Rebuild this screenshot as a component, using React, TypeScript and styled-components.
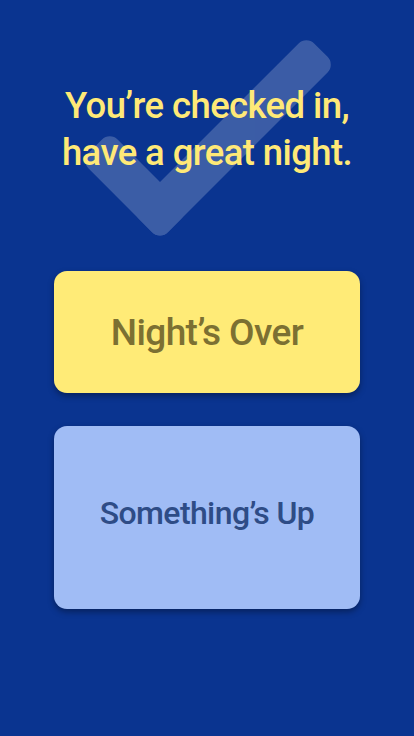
import React from "react";
import styled, { createGlobalStyle } from "styled-components";

const GlobalStyle = createGlobalStyle`
  html, body {
    margin: 0;
    padding: 0;
    background: #0a3490;
  }
  * {
    box-sizing: border-box;
  }
`;

const Screen = styled.div`
  width: 414px;
  height: 736px;
  background: #0a3490;
  display: flex;
  flex-direction: column;
  align-items: center;
  padding: 82px 54px 0;
  font-family: Roboto, "Liberation Sans", sans-serif;
  overflow: hidden;
`;

const Header = styled.div`
  position: relative;
  width: 100%;
  height: 189px;
  display: flex;
  justify-content: center;
`;

const CheckMark = styled.svg`
  position: absolute;
  left: -54px;
  top: -82px;
  width: 414px;
  height: 271px;
`;

const Title = styled.h1`
  position: relative;
  margin: 0;
  color: #ffe977;
  font-size: 36.5px;
  font-weight: 500;
  line-height: 47px;
  text-align: center;
  letter-spacing: -0.6px;
  white-space: nowrap;
`;

const Buttons = styled.div`
  width: 100%;
  display: flex;
  flex-direction: column;
  gap: 33px;
`;

interface ActionProps {
  tall?: boolean;
  tone: "yellow" | "blue";
}

const Action = styled.button<ActionProps>`
  width: 306px;
  height: ${p => (p.tall ? "183px" : "122px")};
  padding: 0 0 ${p => (p.tall ? "10px" : "0")};
  border: none;
  border-radius: 13px;
  background: ${p => (p.tone === "yellow" ? "#ffeb77" : "#a0bcf5")};
  color: ${p => (p.tone === "yellow" ? "#7c7032" : "#2e4c86")};
  font-family: inherit;
  font-size: ${p => (p.tall ? "32px" : "37px")};
  font-weight: 500;
  letter-spacing: -0.6px;
  box-shadow: 0 3px 6px rgba(0, 0, 0, 0.35);
  cursor: pointer;
`;

export default function App() {
  return (
    <>
      <GlobalStyle />
      <Screen>
        <Header>
          <CheckMark viewBox="0 0 414 271">
            <g opacity={0.2} fill="#ffffff" transform="translate(160 240) rotate(45)">
              <rect x={-41} y={-248} width={41} height={248} rx={11} />
              <rect x={-112} y={-41} width={112} height={41} rx={11} />
            </g>
          </CheckMark>
          <Title>
            You’re checked in,
            <br />
            have a great night.
          </Title>
        </Header>
        <Buttons>
          <Action tone="yellow">Night’s Over</Action>
          <Action tone="blue" tall>
            Something’s Up
          </Action>
        </Buttons>
      </Screen>
    </>
  );
}
